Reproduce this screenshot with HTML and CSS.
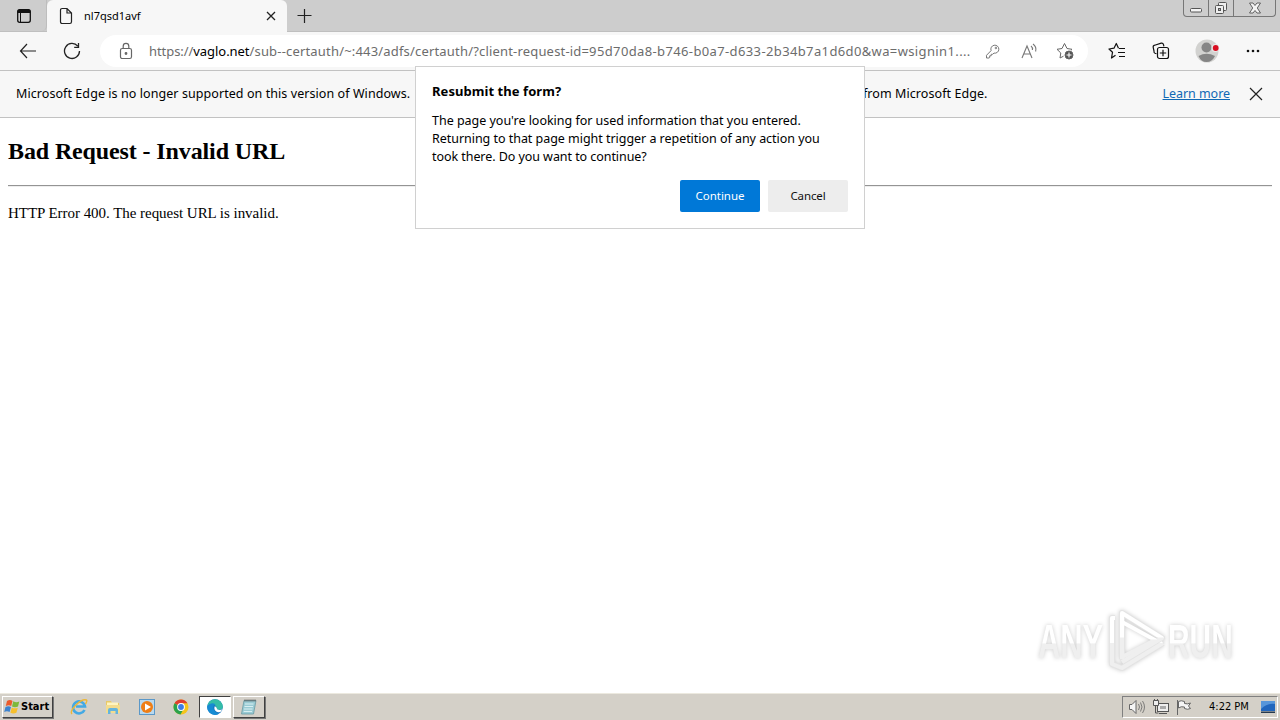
FILE: index.html
```html
<!DOCTYPE html>
<html lang="en">
<head>
<meta charset="utf-8">
<title>nl7qsd1avf</title>
<link rel="stylesheet" href="styles.css">
</head>
<body>
<div class="screen">
  <header class="tabstrip">
    <div class="tab-actions"><svg width="16" height="16" viewBox="0 0 16 16"><rect x="1.700" y="1.700" width="12.600" height="12.600" rx="2" fill="none" stroke="#111" stroke-width="1.300"/><path d="M1.500 5V3.500a2 2 0 0 1 2-2h9a2 2 0 0 1 2 2V5z" fill="#111"/><path d="M4.500 5v9" stroke="#111"/></svg></div>
    <div class="tab">
      <svg class="tab-page" width="14" height="18" viewBox="0 0 14 18" fill="none" stroke="#222" stroke-width="1.2"><path d="M1.500 3.200c0-1 .6-1.700 1.600-1.700H8l4.500 4.500v8.800c0 1-.6 1.700-1.600 1.700H3.100c-1 0-1.600-.7-1.600-1.700zM8 1.500V6h4.500"/></svg>
      <span class="tab-title">nl7qsd1avf</span>
      <svg class="tab-close" width="10" height="10" viewBox="0 0 10 10" stroke="#222" stroke-width="1.3"><path d="M1 1l8 8M9 1L1 9"/></svg>
    </div>
    <svg class="new-tab" width="16" height="16" viewBox="0 0 16 16" stroke="#222" stroke-width="1.2"><path d="M7.500 1v14M.5 7.500h14"/></svg>
    <div class="window-controls">
      <span class="wc wc-min"><svg width="14" height="14" viewBox="0 0 14 14"><rect x="1.500" y="7.500" width="11" height="3.500" rx="1" fill="#f4f4f4" stroke="#555"/></svg></span>
      <span class="wc wc-max"><svg width="14" height="14" viewBox="0 0 14 14" fill="#eee" stroke="#555"><rect x="4.500" y="1.500" width="8" height="8" rx="1"/><rect x="1.500" y="4.500" width="8" height="8" rx="1"/><rect x="4.500" y="7.500" width="2" height="2" fill="#bbb"/></svg></span>
      <span class="wc wc-close"><svg width="14" height="12" viewBox="0 0 14 12"><path d="M1.500 1h3.500l2 2.500L9 1h3.500L9.300 6l3.200 5H9L7 8.500 5 11H1.500l3.200-5z" fill="#f4f4f4" stroke="#555" stroke-width=".9"/></svg></span>
    </div>
  </header>

  <nav class="toolbar">
    <svg class="back" width="18" height="16" viewBox="0 0 18 16" fill="none" stroke="#222" stroke-width="1.2"><path d="M8 1L1.500 8 8 15M1.500 8H17"/></svg>
    <svg class="reload" width="18" height="18" viewBox="0 0 18 18" fill="none" stroke="#222" stroke-width="1.3"><path d="M16.500 9A7.500 7.500 0 1 1 14.800 4.200M15.500 1v4.300h-4.300"/></svg>
    <div class="address">
      <svg class="lock" width="14" height="18" viewBox="0 0 14 18" fill="none" stroke="#666" stroke-width="1.200"><rect x="1.500" y="6.500" width="11" height="10" rx="1.800"/><path d="M4.200 6.500V4.200a2.800 2.800 0 0 1 5.600 0v2.300"/><circle cx="7" cy="11.500" r=".8" fill="#666"/></svg>
      <span class="url"><span class="host">https://<b>vaglo.net</b></span><span class="path">/sub--certauth/~:443/adfs/certauth/?client-request-id=</span><span class="query">95d70da8-b746-b0a7-d633-2b34b7a1d6d0&amp;wa=wsignin1....</span></span>
      <svg class="key" width="15" height="15" viewBox="0 0 15 15" fill="none" stroke="#777"><path d="M6.100 6.600A4 4 0 1 1 9 9.100L7.600 10.300H6.200v1.500H4.700v1.500L4.200 14H1.500v-2.700z"/><circle cx="10.900" cy="4" r=".8"/></svg>
      <svg class="read" width="17" height="17" viewBox="0 0 17 17" fill="none" stroke="#777" stroke-width="1.100"><path d="M1 15L6 3l5 12M2.800 11h6.500M10 3a4 4 0 0 1 1.400 4M12 1a7 7 0 0 1 2.600 7.500"/></svg>
      <svg class="fav" width="18" height="18" viewBox="0 0 18 18" fill="none" stroke="#666"><path d="M7.500 14.200L4 16l.8-5L1 7.300l5-.8L8.500 1.500 11 6.500l5 .8-1.300 1.300" stroke-linejoin="round"/><circle cx="13" cy="13" r="4" fill="#555"/><path d="M13 10.500v5M10.500 13h5" stroke="#fff" stroke-width="1.100"/></svg>
    </div>
    <svg class="favorites" width="18" height="18" viewBox="0 0 18 18" fill="none" stroke="#111" stroke-width="1.200" stroke-linejoin="round"><path d="M7.500 13.200L3.500 16l1-5.700L1 7l5-.8L8.300 1.500l2.200 4.700M11 6.500h6M10 10.500h7M11 14.500h6"/></svg>
    <svg class="collections" width="18" height="18" viewBox="0 0 18 18" fill="none" stroke="#111" stroke-width="1.200"><path d="M4.500 11.800L3 11.300a2 2 0 0 1-1-2.300L1.200 5.500a2 2 0 0 1 1.500-2.300l6.500-2a2 2 0 0 1 2.300 1.500l.4 1.600"/><rect x="5.500" y="5.500" width="11" height="11" rx="2"/><path d="M11 7.800v6.400M7.800 11h6.400"/></svg>
    <svg class="profile" width="24" height="24" viewBox="0 0 24 24"><circle cx="12" cy="12" r="11.500" fill="#d2d2d0"/><circle cx="11.500" cy="8.500" r="5" fill="#858585"/><path d="M3.500 17Q11.500 12.500 20 17q-3 6-8.500 6t-8-6z" fill="#858585"/><circle cx="20.500" cy="9" r="4" fill="#e9e9e9"/><circle cx="20.700" cy="9" r="2.900" fill="#d80d20"/></svg>
    <svg class="more" width="14" height="4" viewBox="0 0 14 4" fill="#111"><circle cx="2" cy="2" r="1.300"/><circle cx="7" cy="2" r="1.300"/><circle cx="12" cy="2" r="1.300"/></svg>
  </nav>

  <section class="banner">
    <span class="banner-start">Microsoft Edge is no longer supported on this version of Windows.</span>
    <span class="banner-end">from Microsoft Edge.</span>
    <a class="learn">Learn more</a>
    <svg class="banner-close" width="14" height="14" viewBox="0 0 14 14" stroke="#222" stroke-width="1.200"><path d="M1 1l12 12M13 1L1 13"/></svg>
  </section>

  <main class="page">
    <h2>Bad Request - Invalid URL</h2>
    <hr>
    <p>HTTP Error 400. The request URL is invalid.</p>
  </main>

  <footer class="taskbar">
    <div class="start">
      <svg width="17" height="16" viewBox="0 0 17 16"><path d="M3 2q3-2 5.500 0L7.200 7Q5 5.500 1.800 7z" fill="#ec5b2b"/><path d="M9.300 2.300q3 1.600 6 .2L14 7.500q-3 1.400-6 0z" fill="#7db83a"/><path d="M1.500 8q3-1.700 5.500 0l-1.400 5Q3 11.500.2 13z" fill="#3d83cf"/><path d="M7.800 8.500q3 1.600 6 .2l-1.400 5q-3 1.600-6 0z" fill="#f6bf2d"/></svg>
      <span class="start-label">Start</span>
    </div>
    <div class="launcher">
      <svg width="18" height="18" viewBox="0 0 18 18" fill="none"><path d="M14.500 12a6 6 0 1 1 .5-3.500H6" stroke="#43a9e4" stroke-width="2.600"/><path d="M2 16Q-.5 13.500 6 7T16.500 2q1 1-1 4" stroke="#edb735" stroke-width="1.400"/></svg>
      <svg width="18" height="18" viewBox="0 0 18 18"><path d="M2 3h5l1 2h7v9H2z" fill="#e8c968"/><path d="M3 4.500h11v5H3z" fill="#fff4bf"/><path d="M2 7h14v8H2z" fill="#f3dc8e"/><path d="M4 16v-4q0-2 2-2h6q2 0 2 2v4h-2.500v-3h-5v3z" fill="#64b4dd"/></svg>
      <svg width="18" height="18" viewBox="0 0 18 18"><rect x="1.500" y="1.500" width="15" height="15" fill="#b9d9ef" stroke="#5b98c8"/><circle cx="9" cy="9" r="6" fill="#ef7e16"/><path d="M7 5.500l6 3.500-6 3.500z" fill="#fff"/></svg>
      <svg width="18" height="18" viewBox="0 0 18 18"><circle cx="9" cy="9" r="7.500" fill="#f5c51b"/><path d="M9 9L2.500 5.200A7.500 7.500 0 0 1 15.500 5.300H9z" fill="#df3e30"/><path d="M2.500 5.200A7.500 7.500 0 0 0 8.500 16.500l3.300-5.900L9 9z" fill="#2ba24c"/><circle cx="9" cy="9" r="3.900" fill="#fff"/><circle cx="9" cy="9" r="2.900" fill="#3d7de6"/></svg>
    </div>
    <div class="task task-active"><svg width="18" height="18" viewBox="0 0 18 18"><circle cx="9" cy="9" r="7.800" fill="#1673bd"/><path d="M1.300 8A7.800 7.800 0 0 1 16.800 8.500q0 3.200-3.400 3.200-3 0-2.800-1.500C11 7 5 4.500 1.300 8z" fill="#34bda7"/><path d="M1.300 8Q5 3.500 9.500 6.300 7 7 7.300 10q.7 4 5.700 5.700A7.800 7.800 0 0 1 1.300 8z" fill="#168bd3"/><path d="M8.500 8.500q2-.4 2.100 1.500.2 2 3 2 1.600 0 2.900-.8-1.500 3.300-4.500 3Q7.700 13 8.500 8.500z" fill="#fff"/></svg></div>
    <div class="task"><svg width="18" height="18" viewBox="0 0 18 18"><path d="M4 2.500h12L13.500 16h-12z" fill="#9acbd4" stroke="#6899a3" stroke-width=".8"/><path d="M5 6h8.500M4.500 8.500h8.500M4 11h8.500M3.700 13.500H12" stroke="#d8eff2"/><path d="M4.500 2.500h11" stroke="#555" stroke-width="2" stroke-dasharray="1 1"/></svg></div>
    <div class="tray">
      <svg width="18" height="16" viewBox="0 0 18 16" fill="none" stroke="#666"><path d="M1.500 5.500h2.500L8 1.500v13L4 10.500H1.500z" fill="#f5f5f5"/><path d="M10.500 5q2 3 0 6M12.500 3.500q3 4.500 0 9M14.500 2q4 6 0 12" stroke-width=".8"/></svg>
      <svg width="16" height="16" viewBox="0 0 16 16" fill="#eee" stroke="#555"><rect x="4.500" y="4.500" width="11" height="8"/><path d="M6 14.500h8M2.500 6v8h3" fill="none"/><path d="M.5 1.500h5v5h-5zM1.500 0v2M4.500 0v2"/><path d="M7 7h6v3H7z" fill="#aaa" stroke="none"/></svg>
      <svg width="16" height="16" viewBox="0 0 16 16" fill="#f5f5f5" stroke="#666"><path d="M1.500 1v15"/><path d="M2.500 2.500Q5 1 8.500 2.500v2q3 1 6-.5l-2 3 2 2.500q-3 1.500-6 0V8Q5 7 2.500 9z"/></svg>
      <span class="clock">4:22 PM</span>
      <svg class="desktop" width="16" height="14" viewBox="0 0 16 14"><path d="M1 1h14v10H1z" fill="#2166bd"/><path d="M1 1h14v3Q7 3 1 9z" fill="#5796da"/><path d="M1 11.500h14v1.500H1z" fill="#24394f"/></svg>
    </div>
  </footer>

  <section class="dialog">
    <h1>Resubmit the form?</h1>
    <div class="message"><span class="m1">The page you're looking for used information that you entered.</span><br><span class="m2">Returning to that page might trigger a repetition of any action you</span><br><span class="m3">took there. Do you want to continue?</span></div>
    <div class="buttons"><button class="primary">Continue</button><button>Cancel</button></div>
  </section>

  <div class="watermark">
    <div class="wm-slot wm-any"><span class="wm-word">ANY</span></div>
    <svg width="60" height="66" viewBox="0 0 60 66" fill="none" stroke-linejoin="round"><defs><linearGradient id="fade" x1="0" y1="0" x2="0" y2="1"><stop offset=".49" stop-color="#fff"/><stop offset=".51" stop-color="#efefef"/></linearGradient></defs><g stroke="#e4e4e4" stroke-width="6"><path d="M15 51V5l40 25-40 24"/><path d="M8 10H5v46l10 4 41-25"/></g><g stroke="url(#fade)" stroke-width="4"><path d="M15 51V5l40 25-40 24"/><path d="M8 10H5v46l10 4 41-25"/><path d="M15 14l33 18-33 17"/></g></svg>
    <div class="wm-slot wm-run"><span class="wm-word">RUN</span></div>
  </div>
</div>
</body>
</html>
```
FILE: styles.css
```css
* { box-sizing: border-box; }
body { margin: 0; background: #fff; color: #000; font-family: "Noto Sans", sans-serif; }
svg { display: block; flex: none; }
.screen { position: relative; width: 1280px; height: 720px; display: flex; flex-direction: column; overflow: hidden; white-space: nowrap; }
.tabstrip { height: 32px; flex: none; display: flex; background: #cdcdcd; border-bottom: 1px solid #bfbfbf; }
.tab-actions { width: 47px; padding: 8px 0 0 16px; border-right: 1px solid #bdbdbd; border-radius: 0 0 5px 0; }
.tab { width: 240px; height: 32px; display: flex; align-items: center; padding: 0 11px 0 12px; background: #f7f7f7; border-radius: 6px 6px 0 0; }
.tab-title { margin: -2px 0 0 11px; font-size: 11px; }
.tab-close { margin-left: auto; }
.new-tab { margin: 8px 0 0 10px; }
.window-controls { display: flex; height: 17px; margin: 0 4px 0 auto; border: 1px solid #777; border-top: 0; border-radius: 0 0 4px 4px; }
.wc { display: flex; justify-content: center; align-items: center; border-right: 1px solid #777; }
.wc-min { width: 25px; }
.wc-max { width: 25px; }
.wc-close { width: 41px; border: 0; }
.toolbar { height: 39px; flex: none; display: flex; align-items: center; padding-left: 19px; background: #f7f7f7; border-bottom: 1px solid #c2c2c2; }
.reload { margin-left: 26px; }
.address { width: 988px; height: 32px; margin-left: 19px; padding-left: 19px; display: flex; align-items: center; background: #fff; border-radius: 16px; }
.url { width: 824px; margin-left: 16px; color: #6c6c6c; font-size: 13px; }
.url b { font-weight: 400; color: #000; }
.host { letter-spacing: -0.06px; }
.path { letter-spacing: 0.18px; }
.query { letter-spacing: 0.37px; }
.key { margin-left: 12px; }
.read { margin-left: 21px; }
.fav { margin-left: 18px; }
.favorites { margin-left: 20px; }
.collections { margin-left: 26px; }
.profile { margin-left: 25px; }
.more { margin-left: 27px; }
.banner { height: 47px; flex: none; display: flex; align-items: center; padding: 0 17px 0 16px; background: #f7f7f7; border-bottom: 1px solid #c2c2c2; font-size: 12.5px; }
.banner span, .learn { padding-bottom: 1.500px; letter-spacing: 0.07px; }
.banner-start { width: 394px; }
.banner-end { margin-left: 453px; }
.banner .learn { margin-left: auto; letter-spacing: -0.05px; color: #1068b5; text-decoration: underline; }
.banner-close { margin-left: 19px; }
.page { flex: 1; padding: 0 8px; font-family: "Liberation Serif", serif; }
.page h2 { margin: 20px 0 0; font-size: 24px; line-height: 27px; letter-spacing: -0.12px; }
.page hr { margin: 20px 0 0; border: 0; border-top: 1px solid #949494; border-bottom: 1px solid #eee; }
.page p { margin: 18px 0 0; font-size: 15px; line-height: 17px; letter-spacing: -0.04px; }
.taskbar { height: 27px; flex: none; display: flex; align-items: center; padding: 1px 2px 2px; background: #d4d0c8; border-top: 1px solid #ece9df; }
.start { width: 51px; height: 22px; display: flex; align-items: center; padding-left: 1px; border: 1px solid #fff; border-right-color: #404040; border-bottom-color: #404040; box-shadow: 1px 1px 0 #777; font: bold 11px "DejaVu Sans Condensed", "DejaVu Sans", sans-serif; }
.launcher { display: flex; gap: 16px; margin: 0 10px 0 17px; }
.task { width: 32px; height: 22px; display: flex; align-items: center; justify-content: center; border: 1px solid #fff; border-right-color: #404040; border-bottom-color: #404040; box-shadow: 1px 1px 0 #777; }
.task-active { margin-right: 2px; background: #fff; border-color: #404040 #fff #fff #404040; box-shadow: none; }
.start + .launcher + .task { margin-left: -1px; }
.tray { width: 156px; height: 22px; display: flex; align-items: center; margin-left: auto; padding-left: 5px; border: 1px solid #fff; border-top-color: #808080; border-left-color: #808080; }
.tray svg + svg { margin-left: 7px; }
.clock { width: 40px; margin-left: 17px; font: 11px "DejaVu Sans Condensed", "DejaVu Sans", sans-serif; }
.tray .desktop { margin-left: 11px; }
.dialog { position: absolute; left: 415px; top: 66px; width: 450px; height: 163px; padding: 16px; background: #fff; border: 1px solid #d0d0d0; }
.dialog h1 { margin: 0; font-size: 13px; line-height: 17px; letter-spacing: 0.06px; }
.message { margin-top: 12px; font-size: 12.5px; line-height: 18px; }
.m1 { letter-spacing: -0.02px; }
.m2 { letter-spacing: -0.035px; }
.m3 { letter-spacing: -0.06px; }
.buttons { display: flex; justify-content: flex-end; gap: 8px; margin-top: 14px; }
.buttons button { width: 80px; height: 32px; padding: 0 0 1px; border: 0; background: #ededed; color: #111; font: 11.5px "Noto Sans", sans-serif; letter-spacing: -0.1px; border-radius: 2px; }
.buttons .primary { background: #0078d7; color: #fff; letter-spacing: 0; }
.watermark { position: absolute; left: 1038px; top: 608px; width: 196px; height: 66px; display: flex; align-items: center; filter: drop-shadow(0 0 2px #ccc); }
.wm-slot { flex: none; }
.wm-word { display: block; width: max-content; font: bold 49px/60px "Liberation Sans", sans-serif; background: linear-gradient(#fff 53%, #efefef 55%); -webkit-background-clip: text; background-clip: text; color: transparent; transform-origin: left center; }
.wm-any { width: 69px; }
.wm-any .wm-word { transform: scaleX(0.63); }
.wm-run { width: 65px; margin-left: 1px; }
.wm-run .wm-word { transform: scaleX(0.61); }
```
